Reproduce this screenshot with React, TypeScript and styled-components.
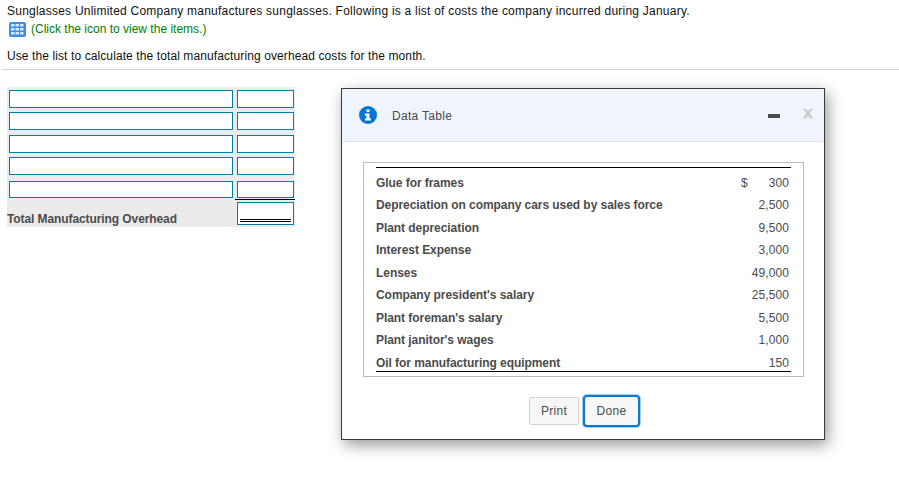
import React from 'react';
import styled, { createGlobalStyle } from 'styled-components';

const GlobalStyle = createGlobalStyle`
    html, body {
        margin: 0;
        padding: 0;
        background: #fff;
    }
    body {
        font-family: 'Liberation Sans', Arial, sans-serif;
        font-size: 12px;
        color: #111;
    }
`;

const costs = [
    { name: 'Glue for frames', amount: '300', dollar: true },
    { name: 'Depreciation on company cars used by sales force', amount: '2,500' },
    { name: 'Plant depreciation', amount: '9,500' },
    { name: 'Interest Expense', amount: '3,000' },
    { name: 'Lenses', amount: '49,000' },
    { name: "Company president's salary", amount: '25,500' },
    { name: "Plant foreman's salary", amount: '5,500' },
    { name: "Plant janitor's wages", amount: '1,000' },
    { name: 'Oil for manufacturing equipment', amount: '150' }
];

const rows = [
    { gap: 0, height: 18 },
    { gap: 4, height: 18 },
    { gap: 5, height: 18 },
    { gap: 4, height: 18 },
    { gap: 6, height: 17 }
];

const GridIcon = () => (
    <svg width="17" height="15" viewBox="0 0 17 15">
        <rect x="0" y="0" width="17" height="15" rx="2" fill="#3f8de0" />
        {[2, 6, 10].map((y) =>
            [2, 6.5, 11].map((x) => (
                <rect key={`${x}-${y}`} x={x} y={y} width="3.5" height="2.5" fill="#d6e8fb" />
            ))
        )}
    </svg>
);

const InfoIcon = () => (
    <svg width="18" height="18" viewBox="0 0 18 18">
        <circle cx="9" cy="9" r="9" fill="#0a77cc" />
        <rect x="7.5" y="3.5" width="3" height="2.5" fill="#fff" />
        <path d="M6 7.5h4.5v5H12v2H6v-2h1.5v-3H6z" fill="#fff" />
    </svg>
);

const CloseIcon = () => (
    <svg width="10" height="9" viewBox="0 0 10 9">
        <path
            d="M0 0h4v1H3.5L5 3l1.5-2H6V0h4v1H9L6.5 4 9 8h1v1H6V8h.5L5 6 3.5 8H4v1H0V8h1l2.5-4L1 1H0z"
            fill="#c8c8c8"
        />
    </svg>
);

const App = () => {
    return (
        <Page>
            <GlobalStyle />
            <Intro>
                <Line>
                    Sunglasses Unlimited Company manufactures sunglasses. Following is a list of costs
                    the company incurred during January.
                </Line>
                <IconLine>
                    <GridIcon />
                    <GreenText>(Click the icon to view the items.)</GreenText>
                </IconLine>
                <Question>Use the list to calculate the total manufacturing overhead costs for the month.</Question>
            </Intro>
            <Divider />
            <Worksheet>
                {rows.map((r, i) => (
                    <Row key={i} $gap={r.gap}>
                        <NameInput $height={r.height} />
                        <AmountInput $height={r.height} />
                    </Row>
                ))}
                <TotalRow>
                    <TotalLabel>Total Manufacturing Overhead</TotalLabel>
                    <TotalInput>
                        <DoubleRule />
                    </TotalInput>
                </TotalRow>
            </Worksheet>
            <Dialog>
                <DialogHeader>
                    <InfoIcon />
                    <DialogTitle>Data Table</DialogTitle>
                    <Minimize />
                    <CloseButton>
                        <CloseIcon />
                    </CloseButton>
                </DialogHeader>
                <DialogBody>
                    <TableBox>
                        <CostTable>
                            {costs.map((c) => (
                                <CostRow key={c.name}>
                                    <CostName>{c.name}</CostName>
                                    <Dollar>{c.dollar ? '$' : ''}</Dollar>
                                    <CostAmount>{c.amount}</CostAmount>
                                </CostRow>
                            ))}
                        </CostTable>
                    </TableBox>
                    <Buttons>
                        <PrintButton>Print</PrintButton>
                        <DoneButton>Done</DoneButton>
                    </Buttons>
                </DialogBody>
            </Dialog>
        </Page>
    );
};

const Page = styled.div`
    position: relative;
    width: 899px;
    height: 480px;
    overflow: hidden;
`;

const Intro = styled.div`
    padding: 4px 0 0 7px;
    height: 66px;
    box-sizing: border-box;
`;

const Line = styled.div`
    line-height: 14px;
    letter-spacing: 0.23px;
    white-space: nowrap;
`;

const IconLine = styled.div`
    display: flex;
    align-items: center;
    gap: 5px;
    margin: 4px 0 0 2px;
    height: 15px;
`;

const GreenText = styled.span`
    color: #008000;
    line-height: 15px;
`;

const Question = styled(Line)`
    margin-top: 12px;
    letter-spacing: 0.1px;
`;

const Divider = styled.div`
    height: 1px;
    margin: 3px 0 0 2px;
    width: 897px;
    background: #d3d5da;
`;

const Worksheet = styled.div`
    width: 288px;
    height: 140px;
    margin: 17px 0 0 7px;
    padding-top: 3px;
    box-sizing: border-box;
    background: #ebebeb;
`;

const Row = styled.div<{ $gap: number }>`
    display: flex;
    gap: 4px;
    margin: ${(p) => p.$gap}px 0 0 2px;
`;

const NameInput = styled.div<{ $height: number }>`
    width: 224px;
    height: ${(p) => p.$height}px;
    box-sizing: border-box;
    border: 1px solid #007fa3;
    background: #fff;
`;

const AmountInput = styled(NameInput)`
    width: 57px;
`;

const TotalRow = styled.div`
    position: relative;
    display: flex;
    justify-content: space-between;
    align-items: flex-end;
    height: 29px;
    padding: 0 1px 0 0;
    &::before {
        content: '';
        position: absolute;
        left: 228px;
        right: 0;
        top: 1px;
        height: 1px;
        background: #000;
    }
`;

const TotalLabel = styled.div`
    font-weight: bold;
    color: #4b4b4b;
    line-height: 16px;
    letter-spacing: -0.09px;
`;

const TotalInput = styled.div`
    display: flex;
    align-items: flex-end;
    width: 57px;
    height: 23px;
    margin-bottom: 2px;
    padding: 0 2px 2px;
    box-sizing: border-box;
    border: 1px solid #007fa3;
    background: #fff;
`;

const DoubleRule = styled.div`
    width: 100%;
    height: 3px;
    box-sizing: border-box;
    border-top: 1px solid #000;
    border-bottom: 1px solid #000;
`;

const Dialog = styled.div`
    position: absolute;
    left: 341px;
    top: 88px;
    width: 484px;
    height: 352px;
    box-sizing: border-box;
    border: 1px solid #3a3a3a;
    background: #fff;
    box-shadow: 3px 5px 14px rgba(0, 0, 0, 0.4);
`;

const DialogHeader = styled.div`
    display: flex;
    align-items: center;
    height: 53px;
    padding: 0 11px 0 17px;
    box-sizing: border-box;
    border-bottom: 1px solid #d5e5f0;
    background: #f0f5fd;
`;

const DialogTitle = styled.div`
    flex: 1;
    margin-left: 15px;
    padding-top: 1px;
    color: #4b4b4b;
    letter-spacing: 0.3px;
`;

const Minimize = styled.div`
    width: 12px;
    height: 4px;
    margin-top: 1px;
    background: #4b4b4b;
`;

const CloseButton = styled.div`
    display: flex;
    width: 10px;
    margin: -3px 0 0 23px;
`;

const DialogBody = styled.div`
    padding: 20px 21px 0;
`;

const TableBox = styled.div`
    width: 441px;
    height: 215px;
    padding: 4px 12px 0;
    box-sizing: border-box;
    border: 1px solid #bbb;
`;

const CostTable = styled.div`
    display: flex;
    flex-direction: column;
    gap: 8.5px;
    width: 415px;
    padding: 7.5px 0 1.5px;
    border-top: 1px solid #000;
    border-bottom: 1px solid #000;
`;

const CostRow = styled.div`
    display: flex;
    align-items: center;
    height: 14px;
    color: #4b4b4b;
`;

const CostName = styled.div`
    flex: 1;
    font-weight: bold;
    letter-spacing: -0.06px;
`;

const Dollar = styled.div`
    width: 7px;
    margin-right: -10px;
`;

const CostAmount = styled.div`
    width: 51px;
    text-align: right;
    padding-right: 2px;
    letter-spacing: 0.1px;
`;

const Buttons = styled.div`
    display: flex;
    align-items: center;
    justify-content: center;
    gap: 4px;
    margin-top: 18px;
    padding-left: 3px;
`;

const PrintButton = styled.button`
    width: 50px;
    height: 28px;
    padding: 0;
    border: 1px solid #d5d5d5;
    border-radius: 2px;
    background: #f7f7f7;
    color: #4b4b4b;
    font: 12px 'Liberation Sans', Arial, sans-serif;
    letter-spacing: 0.3px;
`;

const DoneButton = styled(PrintButton)`
    width: 57px;
    height: 32px;
    border: 2px solid #0b78cf;
    border-radius: 4px;
    box-shadow: 0 0 1px 1px rgba(11, 120, 207, 0.4);
`;

export default App;
